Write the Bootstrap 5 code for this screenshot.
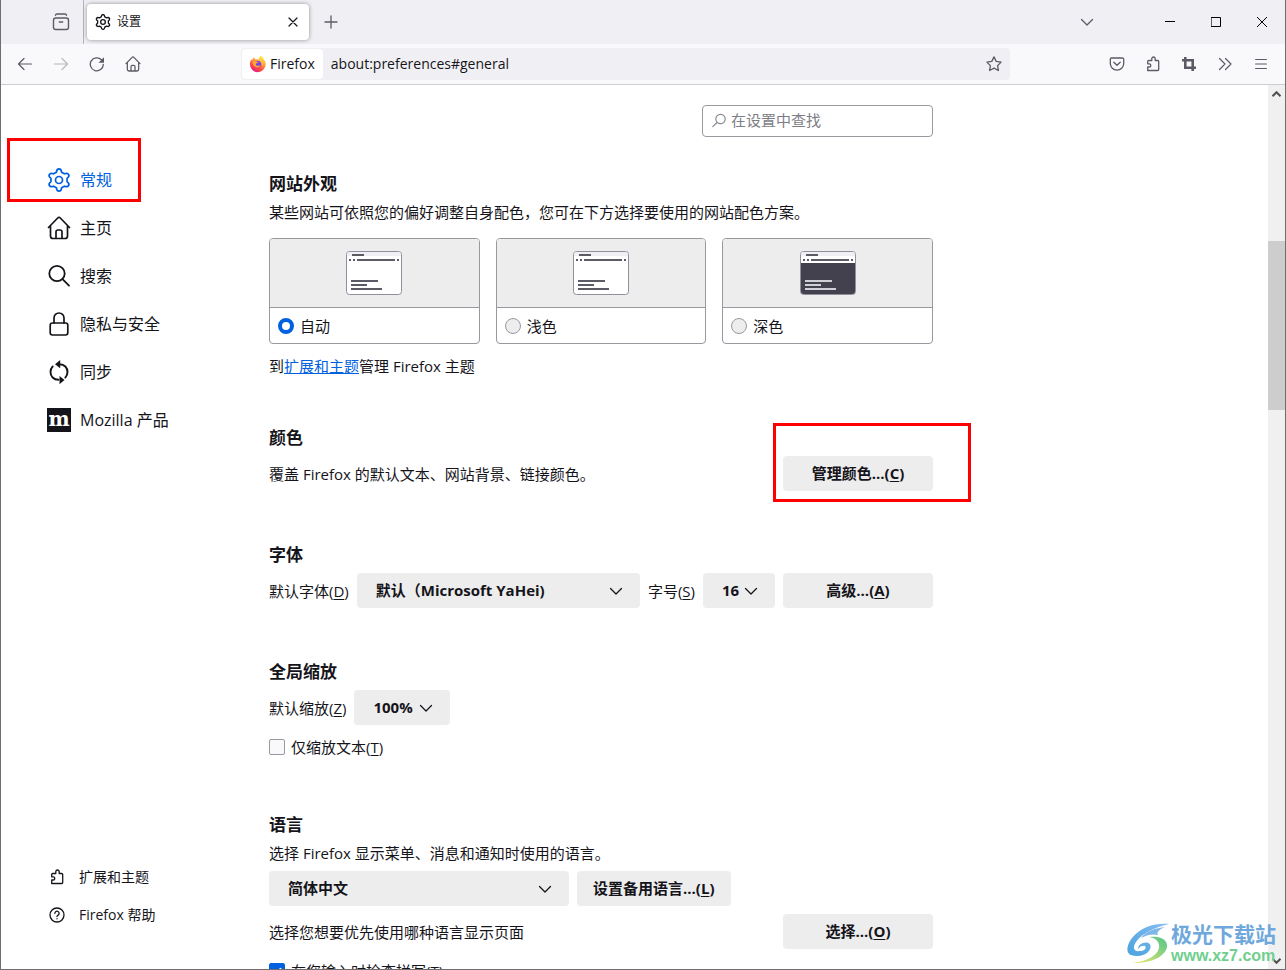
<!DOCTYPE html>
<html lang="zh-CN">
<head>
<meta charset="utf-8">
<meta name="viewport" content="width=device-width, initial-scale=1">
<title>设置</title>
<link href="https://cdn.jsdelivr.net/npm/bootstrap@5.3.0/dist/css/bootstrap.min.css" rel="stylesheet">
<style>
  :root { --ink: #15141a; --accent: #0061e0; --chrome-icon: #5b5b66; --field: #ededed; --edge: #98989f; }
  body { font-family: "Open Sans", "Noto Sans CJK SC", sans-serif; font-size: 15px; line-height: 24px; color: var(--ink); background: #fff; }
  svg { display: block; flex: none; }
  .line-icon { fill: none; stroke: currentColor; stroke-linecap: round; stroke-linejoin: round; }
  .window-frame { border: solid #6e6e6e; border-width: 0 1px 1px; }

  /* tab strip */
  .tab-strip { height: 44px; background: #f0f0f4; color: var(--chrome-icon); }
  .view-area { width: 83px; padding-left: 37px; border-right: 1px solid #b4b4bb; }
  .icon-btn { width: 36px; height: 32px; padding: 0; border: 0; color: inherit; display: flex; align-items: center; justify-content: center; }
  .icon-btn:disabled { border: 0; color: inherit; opacity: .4; }
  .view-btn { width: 46px; }
  .page-tab { width: 222px; height: 36px; margin-left: 3px; padding: 0 8px; gap: 6px; border-radius: 4px; background: #fff; color: var(--ink); box-shadow: 0 0 4px rgba(0,0,0,.4); font-size: 12px; }
  .page-tab .icon-btn { width: 16px; }
  .win-btn { width: 46px; height: 44px; color: #000; }
  .win-group { padding-left: 42px; }

  /* navigation bar */
  .nav-bar { height: 41px; padding: 0 6px; background: #f9f9fb; border-bottom: 1px solid #ccccd1; color: var(--chrome-icon); }
  .url-bar { height: 32px; margin: 0 89px 0 90px; padding: 1px; border-radius: 4px; background: #f0f0f4; color: var(--ink); font-size: 14px; }
  .site-chip { height: 30px; padding: 0 8px 0 7px; border-radius: 4px; background: #fff; gap: 3px; }
  .url-field { padding: 0 8px; border: 0; background: transparent; font-size: 14px; line-height: 24px; color: var(--ink); outline: 0; }
  .url-bar .icon-btn { width: 30px; color: var(--chrome-icon); }

  /* sidebar */
  .side { width: 268px; padding: 71px 0 35px 46px; }
  .side a { color: var(--ink); display: flex; align-items: center; padding: 0; text-decoration: none; }
  .side .cat { height: 48px; gap: 9px; font-size: 16px; position: relative; }
  .side .cat.active { color: var(--accent); }
  .side .foot { height: 38px; gap: 14px; padding-left: 2px; font-size: 14px; }
  .moz-mark { width: 24px; height: 24px; background: var(--ink); color: #fff; font: bold 20px/22px "DejaVu Serif", serif; text-align: center; }
  .callout-box { position: absolute; border: 3px solid #f00; pointer-events: none; }
  .callout-nav { left: -40px; top: -18px; width: 134px; height: 64px; }
  .callout-color { left: -10px; top: -33px; width: 198px; height: 79px; }

  /* preferences pane */
  .pane { max-width: 664px; padding-top: 20px; }
  .find-box { width: 231px; margin-bottom: 35px; position: relative; }
  .find-box svg { position: absolute; left: 9px; top: 8px; color: #8a8a94; }
  .find-box input { height: 32px; padding: 0 8px 2px 28px; border: 1px solid var(--edge); border-radius: 4px; font-size: 15px; }
  .find-box input::placeholder { color: #7d7d85; opacity: 1; }
  h2 { font-size: 17px; line-height: 24px; font-weight: 700; margin: 0; }
  .sec { margin-top: 52px; }
  .sec-near { margin-top: 48px; }
  .sec-last { margin-top: 54px; }
  .mt-row { margin-top: 6px; }
  .mt-line { margin-top: 10px; }
  .scheme-row { margin-top: 14px; }
  .check-row { gap: 6px; }
  .scheme { border: 1px solid var(--edge); border-radius: 4px; overflow: hidden; flex: 1 1 0; cursor: pointer; }
  .scheme-art { height: 69px; background: var(--field); border-bottom: 1px solid var(--edge); }
  .scheme-pick { height: 35px; padding-left: 8px; gap: 6px; }
  .form-check-input { width: 16px; height: 16px; margin: 0; border: 1px solid var(--edge); background-color: var(--field); flex: none; }
  .form-check-input[type=checkbox] { border-radius: 2px; background-color: #f9f9fb; }
  .form-check-input[type=radio]:checked { border: 4px solid var(--accent); background: #fff; }
  .form-check-input[type=checkbox]:checked { border-color: var(--accent); background-color: var(--accent); }
  .pref-link { color: var(--accent); }
  .btn-pref { height: 35px; min-width: 150px; padding: 0 16px; border: 0; border-radius: 4px; background: var(--field); color: var(--ink); font-size: 15px; font-weight: 700; }
  .pick { height: 35px; width: auto; padding: 0 40px 0 19px; border: 0; border-radius: 4px; font-size: 15px; font-weight: 700; color: var(--ink);
    background: var(--field) url("data:image/svg+xml,%3Csvg xmlns='http://www.w3.org/2000/svg' viewBox='0 0 16 16'%3E%3Cpath fill='none' stroke='%2315141a' stroke-width='1.3' stroke-linecap='round' stroke-linejoin='round' d='M2.5 5.5 8 11l5.500-5.500'/%3E%3C/svg%3E") no-repeat right 16px center / 16px 16px; }
  .pick-font { width: 0; }
  .pick-size { width: 72px; padding-right: 0; }
  .pick-zoom { width: 96px; padding-right: 0; }
  .pick-lang { width: 300px; }
  u { text-underline-offset: 2px; }

  /* scrollbar */
  .scroll-rail { width: 17px; background: #f0f0f0; color: #505050; }
  .scroll-rail .icon-btn { width: 17px; height: 17px; }
  .scroll-thumb { background: #cdcdcd; }

  /* site stamp */
  .stamp { position: absolute; right: 9px; bottom: 4px; gap: 2px; pointer-events: none; }
  .stamp-name { font-size: 21px; line-height: 25px; font-weight: 700; color: #6fa8dc; }
  .stamp-site { font: bold 16px/18px "Liberation Sans", Arial, sans-serif; color: #6fcf8e; }
</style>
</head>
<body>
<svg width="0" height="0" class="position-absolute" aria-hidden="true">
  <symbol id="gear" viewBox="-12 -12 24 24"><path d="M-2.600-7.800C-2.200-12.200 2.200-12.200 2.600-7.800L5.450-6.150C9.470-8 11.670-4.200 8.050-1.650L8.050 1.650C11.670 4.200 9.470 8 5.450 6.150L2.600 7.800C2.200 12.200-2.200 12.200-2.600 7.800L-5.450 6.150C-9.470 8-11.670 4.200-8.050 1.650L-8.050-1.650C-11.670-4.200-9.470-8-5.450-6.150Z"/><circle r="3.500"/></symbol>
  <symbol id="home" viewBox="0 0 24 24"><path d="M1.500 11.500 10.700 2a1.800 1.800 0 0 1 2.600 0l9.200 9.500M3.500 10v10a2.500 2.500 0 0 0 2.500 2.500h12a2.500 2.500 0 0 0 2.500-2.500V10M9 22.500V16a2 2 0 0 1 2-2h2a2 2 0 0 1 2 2v6.500"/></symbol>
  <symbol id="puzzle" viewBox="0 0 16 16"><path d="M2.700 14.500h10a1 1 0 0 0 1-1V5.500a1 1 0 0 0-1-1H10.200V2.700a1.700 1.700 0 0 0-3.400 0V4.500H3.700a1 1 0 0 0-1 1v2.300h1.500a1.600 1.600 0 0 1 0 3.200H2.700z"/></symbol>
  <symbol id="chev" viewBox="0 0 16 16"><path d="M2.500 5.500 8 11l5.500-5.500"/></symbol>
</svg>

<div class="window-frame vh-100 d-flex flex-column overflow-hidden position-relative">
  <header>
    <div class="tab-strip d-flex align-items-center">
      <div class="view-area h-100 d-flex align-items-center">
        <button class="btn icon-btn view-btn" aria-label="Firefox View"><svg class="line-icon" width="18" height="18" viewBox="0 0 18 18" stroke-width="1.400"><path d="M3.500 2.200q.2-1.200 1.500-1.200h8q1.300 0 1.500 1.200"/><rect x="1.500" y="5" width="15" height="11.500" rx="2.200"/><path d="M7.300 9h3.400"/></svg></button>
      </div>
      <div class="page-tab d-flex align-items-center">
        <svg class="line-icon" width="16" height="16" stroke-width="2"><use href="#gear"/></svg>
        <span class="flex-grow-1">设置</span>
        <button class="btn icon-btn" aria-label="关闭标签页"><svg class="line-icon" width="10" height="10" viewBox="0 0 10 10" stroke-width="1.200"><path d="M1 1l8 8M9 1 1 9"/></svg></button>
      </div>
      <button class="btn icon-btn ms-1" aria-label="新建标签页"><svg class="line-icon" width="14" height="14" viewBox="0 0 14 14" stroke-width="1.300"><path d="M7 1v12M1 7h12"/></svg></button>
      <button class="btn icon-btn ms-auto" aria-label="列出标签页"><svg class="line-icon" width="16" height="16" stroke-width="1.300"><use href="#chev"/></svg></button>
      <div class="win-group d-flex">
        <button class="btn icon-btn win-btn" aria-label="最小化"><svg class="line-icon" width="10" height="10" viewBox="0 0 10 10" stroke-width="1"><path d="M0 4.500h10"/></svg></button>
        <button class="btn icon-btn win-btn" aria-label="最大化"><svg class="line-icon" width="10" height="10" viewBox="0 0 10 10" stroke-width="1"><path d="M.5.5h9v9h-9z"/></svg></button>
        <button class="btn icon-btn win-btn" aria-label="关闭"><svg class="line-icon" width="10" height="10" viewBox="0 0 10 10" stroke-width="1"><path d="M.3.3l9.400 9.400M9.700.3.3 9.700"/></svg></button>
      </div>
    </div>

    <nav class="nav-bar d-flex align-items-center">
      <button class="btn icon-btn" aria-label="后退"><svg class="line-icon" width="16" height="16" viewBox="0 0 16 16" stroke-width="1.200"><path d="M14.500 8H1.500M7 2.500 1.500 8 7 13.500"/></svg></button>
      <button class="btn icon-btn" aria-label="前进" disabled><svg class="line-icon" width="16" height="16" viewBox="0 0 16 16" stroke-width="1.200"><path d="M1.500 8h13M9 2.500 14.500 8 9 13.500"/></svg></button>
      <button class="btn icon-btn" aria-label="刷新"><svg class="line-icon" width="16" height="16" viewBox="0 0 16 16" stroke-width="1.300"><path d="M14.300 8.500A6.500 6.500 0 1 1 12.500 3.800L14 5.200"/><path fill="currentColor" stroke="none" d="M15 1.200v5a.5.5 0 0 1-.5.5h-5z"/></svg></button>
      <button class="btn icon-btn" aria-label="主页"><svg class="line-icon" width="16" height="16" stroke-width="1.900"><use href="#home"/></svg></button>
      <div class="url-bar d-flex align-items-center flex-grow-1">
        <div class="site-chip d-flex align-items-center">
          <svg width="18" height="18" viewBox="0 0 18 18" aria-hidden="true">
            <defs>
              <linearGradient id="fx" x1=".8" y1="0" x2=".25" y2="1"><stop offset="0" stop-color="#fff44f"/><stop offset=".35" stop-color="#ffa436"/><stop offset=".7" stop-color="#ff4a45"/><stop offset="1" stop-color="#e31587"/></linearGradient>
              <linearGradient id="fy" x1="0" y1="0" x2="0" y2="1"><stop offset="0" stop-color="#fff44f"/><stop offset="1" stop-color="#ff9640"/></linearGradient>
            </defs>
            <path fill="url(#fx)" d="M11.800.8c2 1.400 2.700 2.800 3 3.800.8.600 1.900 2.300 1.900 4.700A7.900 7.900 0 0 1 .9 9.200c0-2 .6-3.600 1.600-4.900l.6 1.100C3.500 4 4 3 5 2.200c.2 1 .7 1.800 1.500 2.200 1.600-.3 2.500 0 3.200.4C9.500 3.400 10.400 1.900 11.800.8z"/>
            <circle cx="8.700" cy="9.300" r="3.300" fill="#7542e5"/>
            <path fill="#ffa436" d="M3.700 6.500c2-1.200 3.500-.2 4.600.4L9.500 7c-.3 1-1.900 1.200-2.400 1.500-.6 1.600.6 2.600 2 2.300.8-.2 1.400-.5 2.200-.1-1 1.700-3.300 2.300-5.200 1.100C3.800 10.500 3.400 8.500 3.700 6.500z"/>
            <path fill="url(#fy)" d="M11.800.8c2 1.400 2.900 3.200 3 4.500 1 3.200.4 5.500-1.700 6.700.6-2.600-.2-4.600-1.800-5.700-1.400-1.700-1-4 .5-5.500z" opacity=".8"/>
          </svg>
          <span>Firefox</span>
        </div>
        <input class="url-field flex-grow-1" type="text" aria-label="地址" value="about:preferences#general">
        <button class="btn icon-btn" aria-label="添加书签"><svg class="line-icon" width="16" height="16" viewBox="0 0 16 16" stroke-width="1.300"><path d="M8 .9 10.200 5.400l4.900.7-3.500 3.500.8 4.900L8 12.200l-4.400 2.300.8-4.900L.9 6.100l4.900-.7z"/></svg></button>
      </div>
      <button class="btn icon-btn" aria-label="Pocket"><svg class="line-icon" width="16" height="16" viewBox="0 0 16 16" stroke-width="1.300"><path d="M2.500 2h11a1.200 1.200 0 0 1 1.200 1.200V7.500a6.700 6.700 0 0 1-13.400 0V3.200A1.200 1.200 0 0 1 2.500 2z"/><path d="M4.800 6.200 8 9.200l3.200-3"/></svg></button>
      <button class="btn icon-btn" aria-label="扩展"><svg class="line-icon" width="16" height="16" stroke-width="1.300"><use href="#puzzle"/></svg></button>
      <button class="btn icon-btn" aria-label="截图"><svg width="16" height="16" viewBox="0 0 16 16" fill="none" stroke="currentColor" stroke-width="2.600"><path d="M4.300 1v10.700H15M1 4.300h10.700V15"/></svg></button>
      <button class="btn icon-btn" aria-label="更多工具"><svg class="line-icon" width="16" height="16" viewBox="0 0 16 16" stroke-width="1.200"><path d="M2.500 2.500 8 8l-5.500 5.500M8.500 2.500 14 8l-5.500 5.500"/></svg></button>
      <button class="btn icon-btn" aria-label="菜单"><svg class="line-icon" width="12" height="12" viewBox="0 0 12 12" stroke-width="1.200"><path d="M.6 1.500h10.800M.6 6h10.800M.6 10.500h10.800"/></svg></button>
    </nav>
  </header>

  <div class="d-flex flex-grow-1 overflow-hidden">
    <aside class="side d-flex flex-column flex-shrink-0">
      <nav class="nav flex-column flex-nowrap">
        <a class="cat active" href="#general"><svg class="line-icon" width="24" height="24" stroke-width="1.700"><use href="#gear"/></svg>常规<span class="callout-box callout-nav"></span></a>
        <a class="cat" href="#home-page"><svg class="line-icon" width="24" height="24" stroke-width="1.700"><use href="#home"/></svg>主页</a>
        <a class="cat" href="#search"><svg class="line-icon" width="24" height="24" viewBox="0 0 24 24" stroke-width="1.800"><circle cx="10" cy="9.500" r="7.700"/><path d="m15.500 15.200 6.500 6.500"/></svg>搜索</a>
        <a class="cat" href="#privacy"><svg class="line-icon" width="24" height="24" viewBox="0 0 24 24" stroke-width="1.700"><rect x="3.200" y="11" width="17.600" height="12" rx="2.200"/><path d="M7 11V6a5 5 0 0 1 10 0v5"/></svg>隐私与安全</a>
        <a class="cat" href="#sync"><svg class="line-icon" width="24" height="24" viewBox="0 0 24 24" stroke-width="1.900"><path d="M12.500 4.200c5 0 8 3.600 8 7.800 0 2.300-.9 4.200-2.200 5.600M11.500 19.800c-5 0-8-3.600-8-7.800 0-2.300.9-4.200 2.200-5.600"/><path fill="currentColor" stroke="none" d="M13.200 0v8.200L8 4.200zM12.500 16v8.200l5-4.200z"/></svg>同步</a>
        <a class="cat" href="#more"><span class="moz-mark" aria-hidden="true">m</span>Mozilla 产品</a>
      </nav>
      <nav class="nav flex-column mt-auto">
        <a class="foot" href="#addons"><svg class="line-icon" width="16" height="16" stroke-width="1.300"><use href="#puzzle"/></svg>扩展和主题</a>
        <a class="foot" href="#help"><svg class="line-icon" width="16" height="16" viewBox="0 0 16 16" stroke-width="1.300"><circle cx="8" cy="8" r="7"/><path d="M5.900 6.300a2.100 2.100 0 1 1 3.200 1.800c-.8.400-1.100.8-1.100 1.500M8 11.700v.1"/></svg>Firefox 帮助</a>
      </nav>
    </aside>

    <main class="flex-grow-1">
      <div class="pane">
        <div class="find-box ms-auto">
          <input class="form-control" id="find" type="search" placeholder="在设置中查找" aria-label="在设置中查找">
          <svg class="line-icon" width="16" height="16" viewBox="0 0 16 16" stroke-width="1.200"><circle cx="9.500" cy="6" r="4.700"/><path d="M6 9.500 1.800 13.700"/></svg>
        </div>

        <section>
          <h2>网站外观</h2>
          <div class="mt-1">某些网站可依照您的偏好调整自身配色，您可在下方选择要使用的网站配色方案。</div>
          <div class="scheme-row d-flex gap-3">
            <label class="scheme">
              <span class="scheme-art d-flex align-items-center justify-content-center">
                <svg width="58" height="46" viewBox="0 0 58 46"><rect x="1.500" y="1.500" width="55" height="43" rx="3" fill="#fff" stroke="#8f8f9d"/><path fill="#f0f0f4" d="M2 6V4.500A2.500 2.500 0 0 1 4.500 2h49A2.500 2.500 0 0 1 56 4.500V6z"/><path stroke="#5b5b66" stroke-width="2" d="M7 5h12M4 10h2M8 10h2M12 10h38M52 10h2M6 31h27M6 35h16M6 39h31"/></svg>
              </span>
              <span class="scheme-pick d-flex align-items-center"><input class="form-check-input" type="radio" name="scheme" checked>自动</span>
            </label>
            <label class="scheme">
              <span class="scheme-art d-flex align-items-center justify-content-center">
                <svg width="58" height="46" viewBox="0 0 58 46"><rect x="1.500" y="1.500" width="55" height="43" rx="3" fill="#fff" stroke="#8f8f9d"/><path fill="#f0f0f4" d="M2 6V4.500A2.500 2.500 0 0 1 4.500 2h49A2.500 2.500 0 0 1 56 4.500V6z"/><path stroke="#5b5b66" stroke-width="2" d="M7 5h12M4 10h2M8 10h2M12 10h38M52 10h2M6 31h27M6 35h16M6 39h31"/></svg>
              </span>
              <span class="scheme-pick d-flex align-items-center"><input class="form-check-input" type="radio" name="scheme">浅色</span>
            </label>
            <label class="scheme">
              <span class="scheme-art d-flex align-items-center justify-content-center">
                <svg width="58" height="46" viewBox="0 0 58 46"><rect x="1.500" y="1.500" width="55" height="43" rx="3" fill="#fff" stroke="#8f8f9d"/><path fill="#f0f0f4" d="M2 6V4.500A2.500 2.500 0 0 1 4.500 2h49A2.500 2.500 0 0 1 56 4.500V6z"/><path fill="#42414d" d="M2 13h54v28.500a2.500 2.500 0 0 1-2.500 2.500h-49A2.500 2.500 0 0 1 2 41.500z"/><path stroke="#5b5b66" stroke-width="2" d="M7 5h12M4 10h2M8 10h2M12 10h38M52 10h2"/><path stroke="#cfcfd8" stroke-width="2" d="M6 31h27M6 35h16M6 39h31"/></svg>
              </span>
              <span class="scheme-pick d-flex align-items-center"><input class="form-check-input" type="radio" name="scheme">深色</span>
            </label>
          </div>
          <div class="mt-line">到<a class="pref-link" href="#themes">扩展和主题</a>管理 Firefox 主题</div>
        </section>

        <section class="sec-near">
          <h2>颜色</h2>
          <div class="mt-row d-flex align-items-center justify-content-between">
            <span>覆盖 Firefox 的默认文本、网站背景、链接颜色。</span>
            <span class="position-relative"><button class="btn btn-pref d-block">管理颜色...(<u>C</u>)</button><span class="callout-box callout-color"></span></span>
          </div>
        </section>

        <section class="sec">
          <h2>字体</h2>
          <div class="mt-row d-flex align-items-center gap-2">
            <label for="font">默认字体(<u>D</u>)</label>
            <select class="form-select pick pick-font flex-grow-1" id="font"><option>默认（Microsoft YaHei)</option></select>
            <label for="size">字号(<u>S</u>)</label>
            <select class="form-select pick pick-size" id="size"><option>16</option></select>
            <button class="btn btn-pref">高级...(<u>A</u>)</button>
          </div>
        </section>

        <section class="sec">
          <h2>全局缩放</h2>
          <div class="mt-row d-flex align-items-center gap-2">
            <label for="zoom">默认缩放(<u>Z</u>)</label>
            <select class="form-select pick pick-zoom" id="zoom"><option>100%</option></select>
          </div>
          <div class="check-row mt-line d-flex align-items-center">
            <input class="form-check-input" type="checkbox" id="text-only"><label for="text-only">仅缩放文本(<u>T</u>)</label>
          </div>
        </section>

        <section class="sec-last">
          <h2>语言</h2>
          <label class="d-block mt-1" for="lang">选择 Firefox 显示菜单、消息和通知时使用的语言。</label>
          <div class="mt-row d-flex gap-2">
            <select class="form-select pick pick-lang" id="lang"><option>简体中文</option></select>
            <button class="btn btn-pref">设置备用语言...(<u>L</u>)</button>
          </div>
          <div class="mt-2 d-flex align-items-center justify-content-between">
            <span>选择您想要优先使用哪种语言显示页面</span>
            <button class="btn btn-pref">选择...(<u>O</u>)</button>
          </div>
          <div class="check-row mt-line d-flex align-items-center">
            <input class="form-check-input" type="checkbox" id="spell" checked><label for="spell">在您输入时检查拼写(<u>T</u>)</label>
          </div>
        </section>
      </div>
    </main>

    <div class="scroll-rail d-flex flex-column flex-shrink-0">
      <button class="btn icon-btn" aria-label="向上滚动"><svg width="9" height="6" viewBox="0 0 9 6" fill="none" stroke="currentColor" stroke-width="2"><path d="M.5 5.200l4-4 4 4"/></svg></button>
      <div style="flex:139 0 0"></div>
      <div class="scroll-thumb" style="flex:169 0 0"></div>
      <div style="flex:542 0 0"></div>
      <button class="btn icon-btn" aria-label="向下滚动"><svg width="9" height="6" viewBox="0 0 9 6" fill="none" stroke="currentColor" stroke-width="2"><path d="M.5.800l4 4 4-4"/></svg></button>
    </div>
  </div>

  <div class="stamp d-flex align-items-center">
    <svg width="42" height="42" viewBox="0 0 42 42" aria-hidden="true">
      <defs><linearGradient id="sw" x1="0" y1="1" x2="1" y2="0"><stop offset="0" stop-color="#4aa3df"/><stop offset="1" stop-color="#86bdf0"/></linearGradient>
      <linearGradient id="sg" x1="0" y1="1" x2="1" y2="0"><stop offset="0" stop-color="#f2ea6a"/><stop offset="1" stop-color="#4fc48c"/></linearGradient></defs>
      <path fill="url(#sw)" d="M42 1C28 0 14 4 5 15-1 23-1 30 4 32c6 2 14 1 18-4 4-6 0-10-6-8-3 1-5 3-5 6 2-3 5-4 7-3 2 2-1 5-5 5-6 1-8-3-4-9C15 10 29 4 42 1z"/>
      <path fill="url(#sg)" d="M22 14c9-1 17 1 18 8 1 8-11 19-36 18 13-1 26-6 28-15 1-6-3-10-10-11z"/>
      <path fill="#7fb6ea" d="M38 4c-9 1-19 4-24 11 7-4 13-4 17-3-2-3 2-6 7-8z"/>
    </svg>
    <div><div class="stamp-name">极光下载站</div><div class="stamp-site">www.xz7.com</div></div>
  </div>
</div>
<script src="https://cdn.jsdelivr.net/npm/bootstrap@5.3.0/dist/js/bootstrap.bundle.min.js"></script>
</body>
</html>
